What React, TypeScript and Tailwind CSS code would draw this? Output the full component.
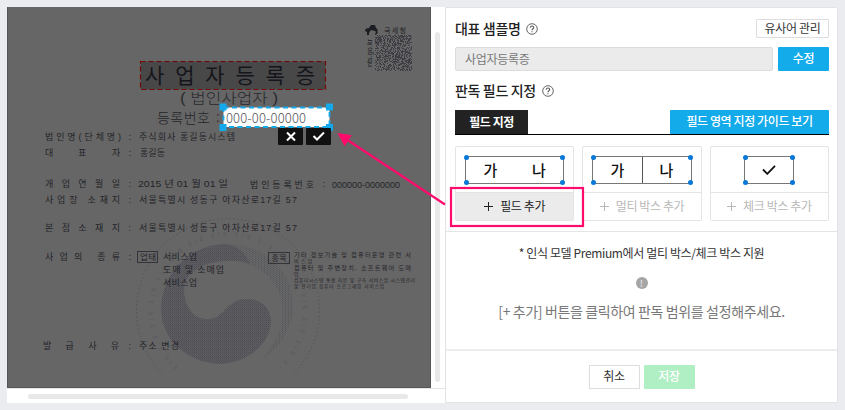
import React from "react";

type Line = { x: number; y: number; w: number; s: number; t: string; o?: number; light?: boolean };

// Vertical centre (y), left edge (x) and extent (w) of each printed line.
const lines: Line[] = [
  { x: 180, y: 97.5, w: 98, s: 14, t: "( 법인사업자 )", o: 0.85, light: true },
  { x: 157, y: 118, w: 53, s: 14, t: "등록번호", o: 0.9, light: true },
  { x: 216, y: 117, w: 4, s: 14, t: ":", o: 0.8, light: true },
  { x: 45, y: 137, w: 76, s: 9, t: "법인명(단체명)" },
  { x: 139, y: 137, w: 96, s: 9, t: "주식회사 홍길동시스템" },
  { x: 45, y: 153, w: 8, s: 9, t: "대" },
  { x: 78, y: 153, w: 8, s: 9, t: "표" },
  { x: 112, y: 153, w: 8, s: 9, t: "자" },
  { x: 140, y: 153, w: 25, s: 9, t: "홍길동" },
  { x: 45, y: 183.5, w: 75, s: 9, t: "개업연월일" },
  { x: 138, y: 183.5, w: 90, s: 9, t: "2015 년 01 월 01 일" },
  { x: 250, y: 184.5, w: 64, s: 9, t: "법인등록번호" },
  { x: 323, y: 184, w: 2, s: 9, t: ":" },
  { x: 332, y: 185, w: 68, s: 9, t: "000000-0000000" },
  { x: 45, y: 199.5, w: 75, s: 9, t: "사업장 소재지" },
  { x: 139, y: 199.5, w: 158, s: 9, t: "서울특별시 성동구 아차산로17길 57" },
  { x: 45, y: 228, w: 75, s: 9, t: "본점소재지" },
  { x: 139, y: 228, w: 158, s: 9, t: "서울특별시 성동구 아차산로17길 57" },
  { x: 45, y: 256.5, w: 75, s: 9, t: "사업의 종류" },
  { x: 140, y: 257, w: 16, s: 8.5, t: "업태" },
  { x: 163, y: 257, w: 34, s: 9, t: "서비스업" },
  { x: 163, y: 270, w: 61, s: 9, t: "도매 및 소매업" },
  { x: 163, y: 282.5, w: 34, s: 9, t: "서비스업" },
  { x: 271.5, y: 258, w: 15, s: 8, t: "종목" },
  { x: 294, y: 254.8, w: 117, s: 6.2, t: "기타 정보기술 및 컴퓨터운영 관련 서" },
  { x: 294, y: 261.2, w: 18, s: 5, t: "비스업" },
  { x: 294, y: 267.5, w: 117, s: 6.2, t: "컴퓨터 및 주변장치, 소프트웨어 도매" },
  { x: 294, y: 274, w: 6, s: 5, t: "업" },
  { x: 294, y: 280.7, w: 121, s: 4.8, t: "컴퓨터시스템 통합 자문 및 구축 서비스업 시스템관리" },
  { x: 294, y: 286.4, w: 90, s: 4.6, t: "및 관리업 컴퓨터 프로그래밍 서비스업" },
  { x: 43, y: 346, w: 76, s: 9, t: "발급사유" },
  { x: 139, y: 346, w: 40, s: 9, t: "주소 변경" },
];

const colons = [137, 153, 183.5, 199.5, 228, 256.5, 346];

function noise(cols: number, rows: number) {
  let state = 90217;
  let d = "";
  for (let r = 0; r < rows; r++) {
    for (let c = 0; c < cols; c++) {
      state ^= state << 13;
      state ^= state >>> 17;
      state ^= state << 5;
      if ((state >>> 0) % 100 > 48) d += `M${375 + c},${35 + r}h1v1h-1z`;
    }
  }
  return d;
}
const qr = noise(37, 36);

function ScannedDocument() {
  return (
    <svg
      viewBox="7 7 424 381"
      className="block h-[381px] w-[424px] shrink-0 bg-[#666666] font-['Liberation_Sans','Noto_Sans_CJK_KR',sans-serif]"
    >
      <defs>
        <pattern id="dots" width="2" height="2" patternUnits="userSpaceOnUse">
          <rect width="2" height="2" fill="#5f5f62" />
          <rect width="1" height="1" fill="#4d4c54" />
          <rect x="1" y="1" width="1" height="1" fill="#55545b" />
        </pattern>
        <pattern id="lightDots" width="3" height="2" patternUnits="userSpaceOnUse">
          <rect width="1" height="1" fill="#53555a" />
          <rect x="1.5" y="1" width="1" height="1" fill="#5a5c60" />
        </pattern>
      </defs>

      <g>
        <path d="M166 377.500A91.500 91.500 0 1 1 290 377.500" fill="none" stroke="#515257" strokeDasharray="1.5 2.5" strokeWidth="0.9" />
        <path d="M176 368A77 77 0 1 1 280 368" fill="none" stroke="#56575c" strokeDasharray="2 5 1 4 3 9" strokeWidth="5" opacity="0.35" />
        <path d="M190 258C205 244 222 243 238 245C270 249 294 276 293 307C292 332 276 352 257 363C277 345 285 325 282 304C278 278 255 260 228 261C208 262 190 270 185 282Z" fill="url(#lightDots)" />
        <path d="M225 244C188 245 161 275 161 310C162 342 190 364 222 364C250 362 271 342 271 321C271 308 261 299 247 299C225 299 226 319 207 319C192 319 184 304 184 289C185 274 200 263 222 261C233 260 243 261 250 264C245 252 238 246 225 244Z" fill="url(#dots)" />
      </g>

      <rect x="140.5" y="61.5" width="185" height="28" fill="#484848" stroke="#780508" strokeWidth="1.2" strokeDasharray="5 3" />
      <text x="145" y="83" fontSize="21" fontWeight="400" fill="#15151c" textLength="170" lengthAdjust="spacing">
        사업자등록증
      </text>

      <g fill="#1c1c24">
        {lines.map((l, i) => (
          <text
            key={i}
            x={l.x}
            y={l.y + l.s * 0.37}
            fontSize={l.s}
            fontWeight={l.light ? 300 : 400}
            opacity={l.o ?? 0.9}
            textLength={l.w}
            lengthAdjust={l.t.length > 1 && l.w / l.t.length < l.s * 0.8 ? "spacingAndGlyphs" : "spacing"}
          >
            {l.t}
          </text>
        ))}
        {colons.map((y) => (
          <text key={y} x="128.5" y={y + 3} fontSize="9" opacity="0.85">:</text>
        ))}
      </g>
      <g fill="none" stroke="#33333a" strokeWidth="1">
        <rect x="137.5" y="251.5" width="20" height="11" />
        <rect x="268.5" y="252.5" width="21" height="11" />
      </g>

      <path d={qr} fill="#3f3e45" />
      <path d="M365 31q0-3 4-3l2-3h4l1 3 2 2-3 1-4-1-2 3 0 2h-2l0-3zM376 29q4 4-1 6l0-1q2-2-1-4z" fill="#1d1d24" />
      <text x="384" y="32.500" fontSize="7" fill="#1d1d24" textLength="22">국세청</text>
      <text transform="translate(372 67) rotate(-90)" fontSize="8" fill="#1d1d24" textLength="28" lengthAdjust="spacingAndGlyphs">
        nts.go.kr
      </text>

      <rect x="223.500" y="107.500" width="106" height="19.500" rx="3" fill="#fff" />
      <rect x="223.500" y="107.500" width="106" height="19.500" fill="none" stroke="#14a9e8" strokeWidth="1.8" strokeDasharray="5 3.5" />
      <g fill="#14a9ea">
        <rect x="219.500" y="103.500" width="7" height="7" />
        <rect x="326" y="103.500" width="7" height="7" />
        <rect x="219.500" y="124" width="7" height="7" />
        <rect x="326" y="124" width="7" height="7" />
      </g>
      <text x="226" y="122.500" fontSize="13" fontWeight="300" fill="#55555c" textLength="80" lengthAdjust="spacing" className="font-['Noto_Sans_CJK_KR',sans-serif]">
        000-00-00000
      </text>

      <rect x="278" y="128" width="25" height="17" rx="1" fill="#111" />
      <rect x="306" y="128" width="25" height="17" rx="1" fill="#111" />
      <path d="M287 132.500l8 8m0-8l-8 8" stroke="#fff" strokeWidth="2" />
      <path d="M313.500 136l3.500 3.500 7-7" fill="none" stroke="#fff" strokeWidth="2" />
      <path d="M7.500 7v381M430.500 7v380.500H7" fill="none" stroke="#555" />
    </svg>
  );
}

function Help() {
  return (
    <svg viewBox="0 0 12 12" className="ml-[6px] mt-[2px] size-3 overflow-visible" fill="none" stroke="#555">
      <circle cx="6" cy="6" r="5.3" strokeWidth="0.9" />
      <path d="M4.3 4.6q.1-1.6 1.700-1.6t1.700 1.400q0 .8-.9 1.400T6 7.300" strokeWidth="1.1" />
      <path d="M6 8.200v1.100" strokeWidth="1.1" />
    </svg>
  );
}

function FieldBox({ width, split, children }: { width: string; split?: boolean; children: React.ReactNode }) {
  return (
    <div className={`relative flex h-7 border border-[#777] text-[15px] font-medium leading-none text-[#111] ${width}`}>
      {children}
      {split && <i className="absolute inset-y-0 left-[49px] w-px bg-[#555]" />}
      <i className="absolute -left-[2px] -top-[2px] size-[5px] rounded-full bg-[#0878d8]" />
      <i className="absolute -right-[2px] -top-[2px] size-[5px] rounded-full bg-[#0878d8]" />
      <i className="absolute -bottom-[2px] -left-[2px] size-[5px] rounded-full bg-[#0878d8]" />
      <i className="absolute -bottom-[2px] -right-[2px] size-[5px] rounded-full bg-[#0878d8]" />
    </div>
  );
}

function Card({ label, active, children }: { label: string; active?: boolean; children: React.ReactNode }) {
  return (
    <div className="flex h-[75px] flex-1 flex-col rounded-[2px] border border-[#e4e4e4]">
      <div className="flex h-[45px] justify-center pt-[9px]">{children}</div>
      <button
        className={`flex flex-1 items-center justify-center border-t border-[#e4e4e4] pb-[2px] text-[12px] leading-none tracking-[-0.4px] ${
          active ? "bg-[#ebebeb] text-[#222]" : "bg-white text-[#b8b8b8]"
        }`}
      >
        <svg viewBox="0 0 9 9" className="mr-[7px] mt-px size-[9px]" stroke="currentColor" strokeWidth="1">
          <path d="M4.500 0v9M0 4.500h9" />
        </svg>
        {label}
      </button>
    </div>
  );
}

export default function App() {
  return (
    <div className="relative flex h-[410px] w-[845px] overflow-hidden bg-[#ebecf0] pl-[7px] pt-[7px] font-['Noto_Sans_CJK_KR','Noto_Sans',sans-serif] text-[#222]">
      <section className="flex h-[396px] w-[438px] flex-col bg-white">
        <div className="flex h-[381px] shrink-0">
          <ScannedDocument />
          <div className="flex flex-1 justify-center pt-[25px]">
            <div className="-ml-[1px] h-[350px] w-[5px] rounded-full bg-[#e8e8e8]" />
          </div>
        </div>
        <div className="flex-1 border-t border-[#e5e5e5] pl-[21px] pt-[5px]">
          <div className="h-[5px] w-[380px] rounded-full bg-[#e8e8e8]" />
        </div>
      </section>

      <section className="flex h-[396px] w-[393px] flex-col rounded-r-[2px] border border-[#e3e3e5] bg-white">
        <div className="flex h-[224px] shrink-0 flex-col border-b border-[#e5e5e5] pl-[9px] pr-[8px]">
          <div className="flex h-[39px] items-start justify-between pt-[11px]">
            <h2 className="flex h-[18px] items-center pb-px text-[14px] font-medium leading-none tracking-[-0.35px]">
              대표 샘플명
              <Help />
            </h2>
            <button className="h-[19px] w-[73px] rounded-[1px] border border-[#ddd] pb-[2px] text-[12px] leading-none tracking-[-0.35px] text-[#333]">
              유사어 관리
            </button>
          </div>
          <div className="flex h-6 gap-[5px]">
            <div className="flex flex-1 items-center rounded-[2px] border border-[#dcdcdc] bg-[#ebebeb] pb-px pl-[9px] text-[12px] leading-none tracking-[-0.3px] text-[#777]">
              사업자등록증
            </div>
            <button className="w-[51px] rounded-[1px] bg-[#14abeb] pb-[3px] text-[12px] font-medium leading-none tracking-[-0.3px] text-white">
              수정
            </button>
          </div>
          <h2 className="flex h-[39px] items-center pb-[2px] text-[14px] font-medium leading-none tracking-[-0.35px]">
            판독 필드 지정
            <Help />
          </h2>
          <div className="flex h-[25px] items-start justify-between border-b border-black">
            <div className="flex h-6 w-[73px] items-center justify-center bg-[#222] pb-px text-[12px] font-bold leading-none tracking-[-0.45px] text-white">
              필드 지정
            </div>
            <button className="h-6 w-[159px] rounded-t-[1px] bg-[#14abeb] pb-[3px] text-[12px] font-medium leading-none tracking-[-0.4px] text-white">
              필드 영역 지정 가이드 보기
            </button>
          </div>
          <div className="mt-[11px] flex gap-2">
            <Card label="필드 추가" active>
              <FieldBox width="w-[99px]">
                <span className="flex flex-1 items-center justify-center pb-px">가</span>
                <span className="flex flex-1 items-center justify-center pb-px">나</span>
              </FieldBox>
            </Card>
            <Card label="멀티 박스 추가">
              <FieldBox width="w-[100px]" split>
                <span className="flex flex-1 items-center justify-center pb-px">가</span>
                <span className="flex flex-1 items-center justify-center pb-px">나</span>
              </FieldBox>
            </Card>
            <Card label="체크 박스 추가">
              <FieldBox width="w-[50px]">
                <svg viewBox="0 0 14 10" className="m-auto h-[10px] w-[14px]" fill="none" stroke="#111" strokeWidth="1.8">
                  <path d="M1 4.500l4.300 4.300L13 .8" />
                </svg>
              </FieldBox>
            </Card>
          </div>
        </div>

        <div className="flex h-[119px] shrink-0 flex-col items-center border-b-2 border-[#ededed]">
          <p className="mt-[13px] h-[16px] whitespace-nowrap text-[12px] leading-[16px] tracking-[-0.37px] text-[#333]">
            * 인식 모델 Premium에서 멀티 박스/체크 박스 지원
          </p>
          <div className="mt-4 flex size-3 items-center justify-center rounded-full bg-[#a5a5a5] text-[9px] font-bold leading-none text-[#ddd]">
            !
          </div>
          <p className="mt-[13px] whitespace-nowrap text-[14px] leading-[18px] tracking-[-0.37px] text-[#777]">
            [+ 추가] 버튼을 클릭하여 판독 범위를 설정해주세요.
          </p>
        </div>

        <div className="flex justify-center gap-1 pt-[14px]">
          <button className="h-6 w-[51px] border border-[#ddd] pb-[3px] text-[12px] leading-none tracking-[-0.3px] text-[#333]">
            취소
          </button>
          <button className="h-6 w-[51px] rounded-[1px] bg-[#b0eec4] pb-[3px] text-[12px] font-medium leading-none tracking-[-0.3px] text-white">
            저장
          </button>
        </div>
      </section>

      <svg viewBox="0 0 845 410" className="pointer-events-none absolute inset-0 h-[410px] w-[845px]">
        <rect x="451" y="188" width="132" height="38" fill="none" stroke="#ff0b6b" strokeWidth="2.200" />
        <path d="M445 204.500L346 139" stroke="#ff0b6b" strokeWidth="2.200" />
        <path d="M337.500 133L351.800 135.200L344.500 146.200Z" fill="#ff0b6b" />
      </svg>
    </div>
  );
}
